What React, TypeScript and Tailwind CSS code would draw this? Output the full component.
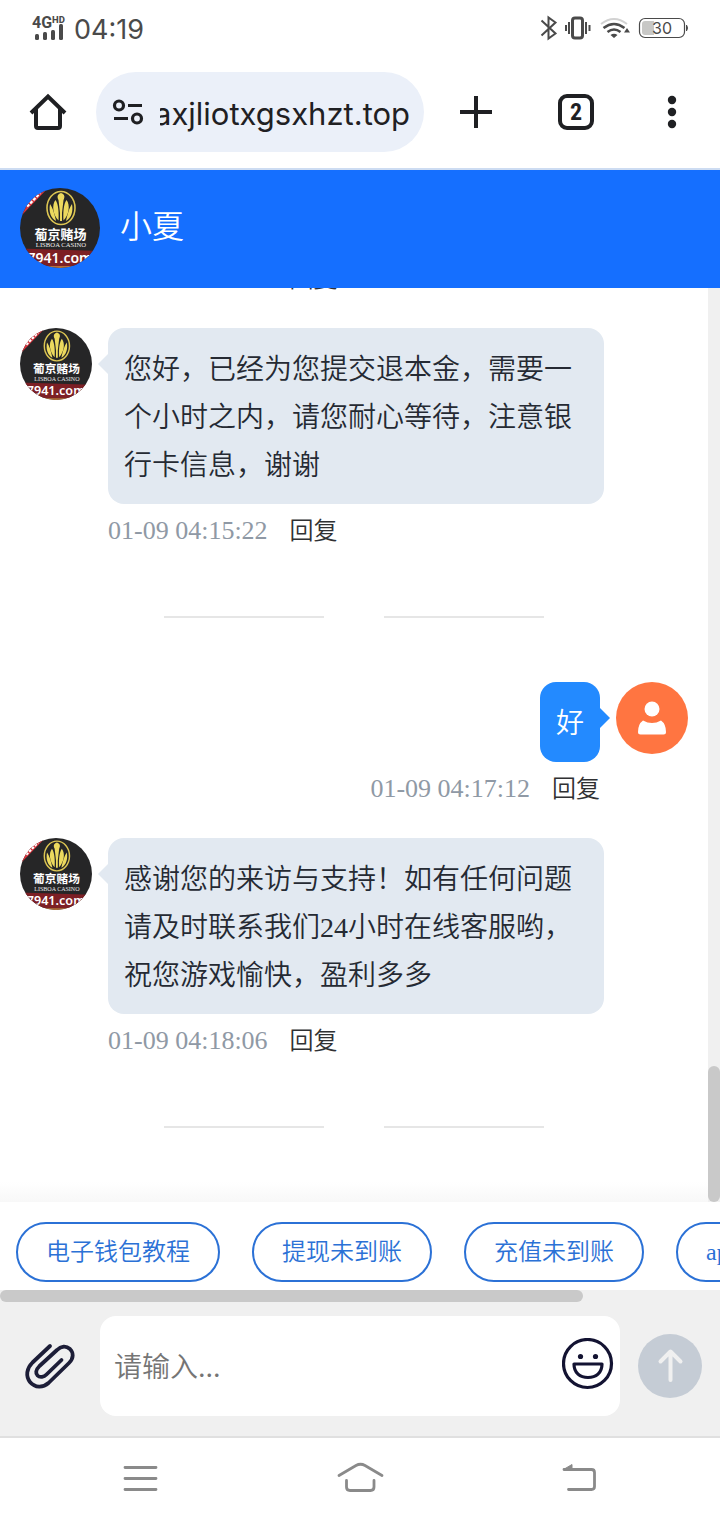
import type { ReactNode } from "react";

const cjk = "font-['Liberation_Serif','Noto_Sans_CJK_SC',sans-serif]";

function BrandAvatar({ className }: { className: string }) {
  return (
    <svg viewBox="0 0 80 80" className={className} role="img" aria-label="葡京赌场">
      <defs>
        <clipPath id="brand-round">
          <circle cx="40" cy="40" r="40" />
        </clipPath>
      </defs>
      <g clipPath="url(#brand-round)">
        <rect width="80" height="80" fill="#262627" />
        <path d="M0 29 L28 0 H0 Z" fill="#d8343c" />
        <path d="M7 18.500 L20 5" stroke="#fff" strokeWidth="2.500" strokeDasharray="3 1.500" />
        <path d="M0 60.500 L80 63 V78 H0 Z" fill="#7d1f24" />
        <rect y="78" width="80" height="2" fill="#b8703a" />
        <ellipse cx="41" cy="20" rx="14" ry="16.500" fill="none" stroke="#dcc552" strokeWidth="1.600" />
        <path d="M41 5 C37 6.500 37 9 38.500 12 L40 25 V33 H42 V25 L43.500 12 C45 9 45 6.500 41 5 Z" fill="#ecd95e" />
        <path d="M35.500 12 C31.500 17 33 27 38.500 32.500 C39 25 38.500 16 35.500 12 Z M46.500 12 C50.500 17 49 27 43.500 32.500 C43 25 43.500 16 46.500 12 Z" fill="#ecd95e" />
        <path d="M30 16 C28.500 24 31 30 36 33 C35 28 33 20 30 16 Z M52 16 C53.500 24 51 30 46 33 C47 28 49 20 52 16 Z" fill="#ecd95e" />
        <text x="40.500" y="50.500" textAnchor="middle" fontSize="13" fontWeight="700" fill="#fff" fontFamily="Noto Sans CJK SC, sans-serif">葡京赌场</text>
        <text x="41" y="58.500" textAnchor="middle" fontSize="6.700" fill="#eee" fontFamily="Liberation Serif, serif">LISBOA CASINO</text>
        <text x="40" y="74.500" textAnchor="middle" fontSize="14" fontWeight="600" fill="#fff" fontFamily="Noto Sans, sans-serif">7941.com</text>
      </g>
    </svg>
  );
}

function UserAvatar() {
  return (
    <svg viewBox="0 0 72 72" className="size-18 shrink-0" role="img" aria-label="我">
      <circle cx="36" cy="36" r="36" fill="#ff7541" />
      <circle cx="36" cy="27" r="7.500" fill="#fff" />
      <path d="M27 38.500 Q36 43.500 45 38.500 Q50 42 50 50 Q50 52.500 47.500 52.500 H24.500 Q22 52.500 22 50 Q22 42 27 38.500 Z" fill="#fff" />
    </svg>
  );
}

function Meta({ time }: { time: string }) {
  return (
    <div className="flex h-[54px] items-center gap-[22px] text-2xl text-[#303133]">
      <time className="text-[26px] text-[#8f99a5]">{time}</time>
      <button type="button" className="font-[350]">回复</button>
    </div>
  );
}

function Incoming({ time, children }: { time: string; children: ReactNode }) {
  return (
    <article className="flex items-start gap-4">
      <BrandAvatar className="size-18 shrink-0" />
      <div className="mr-21 flex-1">
        <div className="relative rounded-2xl bg-[#e2e9f1] px-4 pt-[18px] pb-[14px] text-[28px] leading-[48px] font-[350] text-[#252a33]">
          <svg viewBox="0 0 10 20" className="absolute top-[26px] -left-[10px] h-5 w-[10px] fill-[#e2e9f1]" aria-hidden="true">
            <path d="M10 0 L0 10 L10 20 Z" />
          </svg>
          {children}
        </div>
        <Meta time={time} />
      </div>
    </article>
  );
}

function Outgoing({ time, children }: { time: string; children: ReactNode }) {
  return (
    <article className="flex items-start justify-end gap-4">
      <div className="flex flex-col items-end">
        <div className="relative rounded-2xl bg-[#238aff] px-4 pt-[18px] pb-[14px] text-[28px] leading-[48px] font-[350] text-white">
          <svg viewBox="0 0 10 20" className="absolute top-[26px] -right-[10px] h-5 w-[10px] fill-[#238aff]" aria-hidden="true">
            <path d="M0 0 L10 10 L0 20 Z" />
          </svg>
          {children}
        </div>
        <Meta time={time} />
      </div>
      <UserAvatar />
    </article>
  );
}

function Divider() {
  return (
    <div className="flex justify-center gap-15 pt-9 pb-[42px]">
      <span className="h-[2px] w-40 bg-[#e6e6e6]" />
      <span className="h-[2px] w-40 bg-[#e6e6e6]" />
    </div>
  );
}

function StatusBar() {
  return (
    <div className="flex h-14 shrink-0 items-center justify-between px-8 text-[#4a4a4a]">
      <div className="flex items-center gap-2">
        <svg viewBox="0 0 34 26" className="h-[26px] w-[34px]" fill="currentColor" aria-hidden="true">
          <text x="0" y="12.500" fontSize="16" fontWeight="700" fontFamily="Roboto, sans-serif">4G</text>
          <text x="20" y="7.500" fontSize="9.500" fontWeight="800" fontFamily="Roboto, sans-serif">HD</text>
          <rect x="3" y="19" width="4" height="6" rx="1.500" />
          <rect x="11" y="17" width="4" height="8" rx="1.500" />
          <rect x="19" y="15" width="4" height="10" rx="1.500" />
          <rect x="27" y="9" width="4" height="16" rx="1.500" />
        </svg>
        <span className="pt-[3px] font-[Inter,sans-serif] text-[27px] leading-none">04:19</span>
      </div>
      <svg viewBox="540 14 148 28" className="h-7 w-[148px]" fill="none" stroke="currentColor" aria-hidden="true">
        <path d="M541.500 20.500 L555.500 33.500 L548.500 38.500 V17.500 L555.500 22.500 L541.500 35.500" strokeWidth="2" />
        <rect x="572.500" y="18" width="10" height="20" rx="2.500" strokeWidth="3" />
        <path d="M569 22 V34 M586 22 V34" strokeWidth="2" />
        <path d="M566 25 V31 M589.500 25 V31" strokeWidth="2" />
        <path d="M601 24 Q614 14 627 24" strokeWidth="2" stroke="#d2d2d2" />
        <path d="M603.500 28 Q614 20 624.500 28" strokeWidth="2.500" />
        <path d="M607.500 32 Q614 27 620.500 32" strokeWidth="2.500" />
        <path d="M610.500 35 Q614 32.500 617.500 35 L614 38 Z M624 32.500 L627 28 L630 32.500 Z" fill="currentColor" stroke="none" />
        <rect x="639.500" y="18.500" width="45" height="19" rx="5.500" strokeWidth="1.200" />
        <path d="M645 21 H654 V35 H645 Q642 35 642 32 V24 Q642 21 645 21 Z" fill="#c8c8c6" stroke="none" />
        <path d="M686.500 25 Q688.500 28 686.500 31 Z" fill="currentColor" strokeWidth="1" />
        <text x="662" y="34" textAnchor="middle" fontSize="16" fill="currentColor" stroke="none" fontFamily="Inter, sans-serif">30</text>
      </svg>
    </div>
  );
}

function BrowserBar() {
  return (
    <div className="flex h-[114px] shrink-0 items-center border-b-2 border-[#cddcf2] px-7 text-[#1f2023]">
      <button type="button" aria-label="主页" className="shrink-0">
        <svg viewBox="0 0 40 40" className="size-10" fill="none" stroke="currentColor" strokeWidth="4">
          <path d="M3 21 L20 4.500 L37 21" />
          <path d="M8 17 V34 Q8 36 10 36 H30 Q32 36 32 34 V17" />
        </svg>
      </button>
      <label className="ml-7 flex h-20 min-w-0 flex-1 items-center gap-4 rounded-full bg-[#ebf0f9] pr-3 pl-4">
        <svg viewBox="0 0 32 32" className="size-8 shrink-0" fill="none" stroke="currentColor" strokeWidth="3.200" aria-hidden="true">
          <circle cx="7" cy="9.500" r="4.500" />
          <path d="M16 9.500 H30 M2 22.500 H16" />
          <circle cx="25" cy="22.500" r="4.500" />
        </svg>
        <input
          aria-label="网址"
          defaultValue="axjliotxgsxhzt.top"
          className="min-w-0 flex-1 bg-transparent pt-1 indent-[-6px] font-[Inter,sans-serif] text-[31px] outline-none"
        />
      </label>
      <button type="button" aria-label="新建标签页" className="ml-8 shrink-0">
        <svg viewBox="0 0 40 40" className="size-10" fill="none" stroke="currentColor" strokeWidth="4">
          <path d="M20 4 V36 M4 20 H36" />
        </svg>
      </button>
      <button
        type="button"
        aria-label="标签页"
        className="ml-[62px] flex size-9 shrink-0 items-center justify-center rounded-[9px] border-4 border-current font-['Roboto_Condensed',Roboto,sans-serif] text-2xl leading-none font-bold"
      >
        2
      </button>
      <button type="button" aria-label="更多" className="ml-[58px] shrink-0">
        <svg viewBox="0 0 40 40" className="size-10" fill="currentColor">
          <circle cx="20" cy="8" r="4.200" />
          <circle cx="20" cy="20" r="4.200" />
          <circle cx="20" cy="32" r="4.200" />
        </svg>
      </button>
    </div>
  );
}

function Composer() {
  return (
    <form className="flex shrink-0 items-center bg-[#f0f0f0] pt-[14px] pr-[18px] pb-5 pl-6" onSubmit={(e) => e.preventDefault()}>
      <button type="button" aria-label="附件" className="mr-6 shrink-0">
        <svg viewBox="0 0 52 48" className="h-12 w-[52px]" fill="none" stroke="#1d1e38" strokeWidth="3.800" strokeLinecap="round" strokeLinejoin="round">
          <path d="M26 4 L8.500 20.500 C2.500 26.500 1.500 34 6 40 C11 46 19 46 24.500 41 L45 21 C50 16 49.500 10.500 46 7 C42 3.500 37 4 33 8 L15.500 24 C11.500 28 11.500 31.500 13.500 33.500 C16 36 20 35 22.500 32.500 L37.500 18" />
        </svg>
      </button>
      <div className="flex h-25 min-w-0 flex-1 items-center rounded-2xl bg-white pr-[6px] pl-[14px]">
        <input
          aria-label="消息"
          placeholder="请输入..."
          className="mb-[3px] min-w-0 flex-1 bg-transparent font-['Noto_Sans_CJK_SC',sans-serif] text-[28px] font-[350] outline-none placeholder:text-[#757575]"
        />
        <button type="button" aria-label="表情" className="mb-1 shrink-0">
          <svg viewBox="0 0 52 52" className="size-[52px]" fill="none" stroke="#131332" strokeWidth="3.200" strokeLinejoin="round">
            <circle cx="25.500" cy="25.500" r="24" />
            <circle cx="18.500" cy="18.500" r="2.600" fill="#131332" stroke="none" />
            <circle cx="33.500" cy="18.500" r="2.600" fill="#131332" stroke="none" />
            <path d="M12 26 H40 C40 35 34 39.500 26 39.500 C18 39.500 12 35 12 26 Z" />
          </svg>
        </button>
      </div>
      <button type="submit" aria-label="发送" className="ml-[18px] shrink-0">
        <svg viewBox="0 0 64 64" className="size-16" fill="none" stroke="#f0f0f0" strokeWidth="4" strokeLinecap="round" strokeLinejoin="round">
          <circle cx="32" cy="32" r="32" fill="#c5ccd5" stroke="none" />
          <path d="M32.500 46 V18 M22.500 27.500 L32.500 17.500 L42.500 27.500" />
        </svg>
      </button>
    </form>
  );
}

function SystemNav() {
  return (
    <nav className="flex h-21 shrink-0 items-center justify-between border-t-2 border-[#e0e0e0] px-[116px] text-[#8a8a8a]">
      <button type="button" aria-label="最近任务">
        <svg viewBox="0 0 48 40" className="h-10 w-12" fill="none" stroke="currentColor" strokeWidth="2.800" strokeLinecap="round">
          <path d="M9 8.500 H40 M9 19.500 H40 M9 30.500 H40" />
        </svg>
      </button>
      <button type="button" aria-label="桌面">
        <svg viewBox="0 0 48 40" className="h-10 w-12" fill="none" stroke="currentColor" strokeWidth="2.800" strokeLinecap="round">
          <path d="M3 16.500 L20 6.500 Q24.500 4 29 6.500 L46 16.500 M10.500 21.500 V28 Q10.500 31.500 14 31.500 H34.500 Q38 31.500 38 28 V21.500" />
        </svg>
      </button>
      <button type="button" aria-label="返回">
        <svg viewBox="0 0 48 40" className="h-10 w-12" fill="none" stroke="currentColor" strokeWidth="2.800" strokeLinecap="round">
          <path d="M8 10.500 H35.500 Q38.500 10.500 38.500 13.500 V27.500 Q38.500 30.500 35.500 30.500 H12.500" />
          <path d="M7.500 10.500 L16 5.500 V10.500 Z" fill="currentColor" strokeWidth="1" />
        </svg>
      </button>
    </nav>
  );
}

const quickReplies = ["电子钱包教程", "提现未到账", "充值未到账", "app下载"];

export default function App() {
  return (
    <div className={`flex h-screen flex-col overflow-hidden bg-white ${cjk}`}>
      <StatusBar />
      <BrowserBar />
      <header className="flex h-[118px] shrink-0 items-center gap-5 bg-[#156fff] px-5 pb-[2px]">
        <BrandAvatar className="size-20 shrink-0" />
        <h1 className="mb-[2px] text-[32px] font-[350] text-white">小夏</h1>
      </header>

      <div className="flex min-h-0 flex-1">
        <main className="flex min-w-0 flex-1 flex-col justify-end gap-[22px] overflow-hidden bg-linear-to-t from-[#f8f8f8] to-white to-[20px] px-5 pb-[32px]">
          <div className="pl-22">
            <Meta time="01-09 04:15:08" />
          </div>
          <Incoming time="01-09 04:15:22">
            您好，已经为您提交退本金，需要一个小时之内，请您耐心等待，注意银行卡信息，谢谢
          </Incoming>
          <Divider />
          <Outgoing time="01-09 04:17:12">好</Outgoing>
          <Incoming time="01-09 04:18:06">
            感谢您的来访与支持！如有任何问题请及时联系我们24小时在线客服哟，祝您游戏愉快，盈利多多
          </Incoming>
          <Divider />
        </main>
        <div className="flex w-3 shrink-0 flex-col justify-end bg-[#f0f0f0]">
          <div className="h-34 rounded-full bg-[#c9c9c9]" />
        </div>
      </div>

      <div className="flex h-22 shrink-0 items-center gap-8 overflow-hidden px-4 pt-3">
        {quickReplies.map((label) => (
          <button
            key={label}
            type="button"
            className="h-15 shrink-0 rounded-full border-2 border-[#2b71d6] px-7 text-2xl font-[350] text-[#2b71d6]"
          >
            {label}
          </button>
        ))}
      </div>
      <div className="h-3 shrink-0 bg-[#f0f0f0]">
        <div className="h-3 w-[81%] rounded-full bg-[#c9c9c9]" />
      </div>
      <Composer />
      <SystemNav />
    </div>
  );
}
